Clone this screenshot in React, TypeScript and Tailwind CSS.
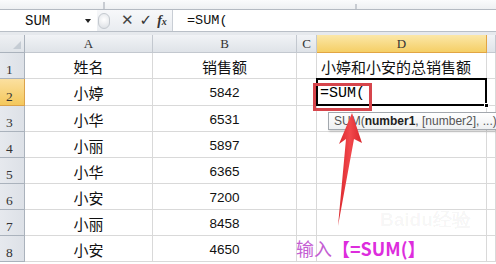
import React from "react";

const CJK = "font-['Noto_Sans_CJK_SC',sans-serif]";
const rows: [string, string, string][] = [
  ["姓名", "销售额", "小婷和小安的总销售额"],
  ["小婷", "5842", "=SUM("],
  ["小华", "6531", ""],
  ["小丽", "5897", ""],
  ["小华", "6365", ""],
  ["小安", "7200", ""],
  ["小丽", "8458", ""],
  ["小安", "4650", ""],
];

const grid = "border-r border-b border-[#d9d9d9]";
const hdr =
  "border-r border-b border-[#c3c8cf] bg-[linear-gradient(#f1f3f6,#dfe3e8)] flex items-center justify-center text-[13px] text-[#333] font-['Liberation_Serif',serif]";

export default function App() {
  return (
    <div className="relative w-[496px] h-[264px] overflow-hidden bg-white">
      {/* top strip */}
      <div className="relative h-[10px] bg-[linear-gradient(#fafbfc,#eef0f2)] border-b border-[#b4bac2]">
        <div className="absolute left-[103px] top-[2px] h-[7px] w-[2px] bg-[#c8ccd2]" />
        <div className="absolute left-[355px] top-[4px] h-[5px] w-[2px] bg-[#c8ccd2]" />
      </div>
      {/* formula bar */}
      <div className="flex h-[22px] border-b border-[#b9bfc7] bg-white">
        <div className="flex w-[97px] items-center pl-[25px] pr-[6px]">
          <span className="font-['Liberation_Mono',monospace] text-[14px] text-[#111] leading-none">SUM</span>
          <span className="ml-auto mt-[1px] h-0 w-0 border-l-[3.5px] border-r-[3.5px] border-t-[4px] border-l-transparent border-r-transparent border-t-[#222]" />
        </div>
        <div className="flex w-[76px] items-center bg-[linear-gradient(#f7f8fa,#e9ecf0)] border-r border-[#c9ced5]">
          <div className="ml-[1px] h-[16px] w-[12px] rounded-full border border-[#c4c9cf] bg-[radial-gradient(circle_at_50%_40%,#ffffff,#d9dde2)]" />
          <span className="ml-[11px] text-[15px] font-bold leading-none text-[#444] font-['DejaVu_Sans',sans-serif]">✕</span>
          <span className="ml-[6px] text-[15px] font-bold leading-none text-[#333] font-['DejaVu_Sans',sans-serif]">✓</span>
          <span className="ml-[5px] italic font-bold text-[14px] leading-none text-[#333] font-['Liberation_Serif',serif]">
            f<span className="text-[10px]">x</span>
          </span>
        </div>
        <div className="flex flex-1 items-center pl-[14px]">
          <span className="font-['Liberation_Mono',monospace] text-[13.5px] text-[#111] leading-none">=SUM(</span>
        </div>
      </div>
      <div className="h-[3px] bg-[#e6e9ed]" />
      {/* sheet */}
      <div className="grid grid-cols-[25px_128px_144px_20px_170px_1fr] grid-rows-[18px_26px_27px_26px_26px_26px_26px_26px_26px]">
        <div className="relative border-r border-b border-[#aab2bc] bg-[linear-gradient(#eef0f3,#dfe3e8)]">
          <svg className="absolute right-[3px] bottom-[3px]" width="8" height="8" viewBox="0 0 8 8">
            <polygon points="8,0 8,8 0,8" fill="#c5ccd4" />
          </svg>
        </div>
        <div className={hdr}>A</div>
        <div className={hdr}>B</div>
        <div className={hdr}>C</div>
        <div className="border-r border-b border-[#e2a543] bg-[linear-gradient(#fbe7a8,#f5cf66)] flex items-center justify-center text-[13px] text-[#333] font-['Liberation_Serif',serif]">
          D
        </div>
        <div className={hdr} />
        {rows.map((r, i) => (
          <React.Fragment key={i}>
            <div
              className={`flex items-end pb-[2px] pl-[6px] border-r border-b text-[13.5px] leading-none text-[#333] font-['Liberation_Serif',serif] ${
                i === 1
                  ? "bg-[linear-gradient(#fbe0a0,#f4c85c)] border-[#dba24a]"
                  : "bg-[linear-gradient(90deg,#e6e9ee,#dde1e7)] border-[#aab2bc]"
              }`}
            >
              {i + 1}
            </div>
            <div className={`${grid} flex items-center justify-center pt-[3px] text-[15px] text-[#111] ${CJK}`}>{r[0]}</div>
            <div
              className={`${grid} flex items-center justify-center pt-[3px] text-[#111] ${
                i === 0 ? `text-[15px] ${CJK}` : "text-[13.5px] font-['Liberation_Sans',sans-serif]"
              }`}
            >
              {r[1]}
            </div>
            <div className={grid} />
            {i === 1 ? (
              <div className="relative border-[2px] border-black -ml-[1px] -mt-[1px] flex items-center pl-[2px] pt-[2px]">
                <span className="font-['Liberation_Mono',monospace] text-[15px] text-black leading-none">=SUM(</span>
                <div className="absolute -right-[4px] -bottom-[4px] h-[5px] w-[5px] bg-black border border-white" />
              </div>
            ) : (
              <div className={`${grid} flex items-center pl-[4px] pt-[3px] text-[15px] text-[#111] ${CJK}`}>{r[2]}</div>
            )}
            <div className={grid} />
          </React.Fragment>
        ))}
      </div>

      {/* watermark */}
      <div className={`absolute left-[380px] top-[210px] text-[19px] font-bold text-[rgba(0,0,0,0.045)] leading-none whitespace-nowrap pointer-events-none font-['Liberation_Sans',sans-serif]`}>
        Baidu经验
      </div>

      {/* tooltip */}
      <div className="absolute left-[328px] top-[112px] h-[18px] w-[200px] border border-[#a3a8ae] bg-[linear-gradient(#ffffff,#eef0f2)] shadow-[1px_2px_2px_rgba(0,0,0,0.15)] pl-[5px] flex items-center text-[12px] leading-none text-[#555] font-['Liberation_Sans',sans-serif] whitespace-nowrap">
        SUM(<b className="text-[#222]">number1</b>, [number2], ...)
      </div>

      {/* red box */}
      <div className="absolute left-[313px] top-[83px] h-[28px] w-[59px] border-[3px] border-[#d6454c]" />

      {/* arrow */}
      <svg className="absolute left-0 top-0 pointer-events-none" width="496" height="264" viewBox="0 0 496 264">
        <defs>
          <linearGradient id="ag" x1="0" y1="0" x2="1" y2="0">
            <stop offset="0" stopColor="#d9262c" />
            <stop offset="0.5" stopColor="#f2484c" />
            <stop offset="1" stopColor="#d9262c" />
          </linearGradient>
        </defs>
        <polygon points="352,113 362,143 354,139 338,226 346,139 339,144" fill="url(#ag)" />
      </svg>

      {/* caption */}
      <div className="absolute left-[296px] top-[239px] flex items-center text-[18px] leading-none whitespace-nowrap">
        <span className={`text-[#c45ed3] ${CJK}`}>输入</span>
        <span className={`text-[#dd2ddd] font-bold ${CJK}`}>【=SUM(】</span>
      </div>
    </div>
  );
}
